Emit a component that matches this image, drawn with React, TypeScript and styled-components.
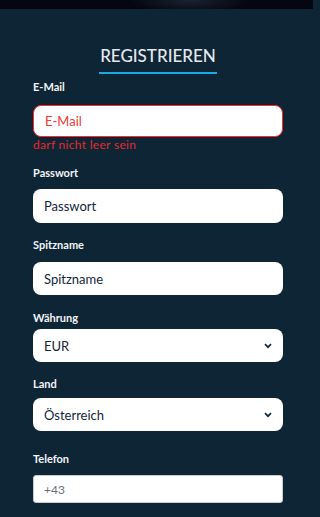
import React from 'react';
import styled, {createGlobalStyle} from 'styled-components';

const GlobalStyle = createGlobalStyle`
  html, body {
    margin: 0;
    padding: 0;
    background: #0e2535;
    font-family: Lato, "Open Sans", sans-serif;
  }
`;

const Page = styled.div`
  width: 313px;
  min-height: 517px;
  background: #0e2535;
`;

const TopBar = styled.div`
  height: 9px;
  background: radial-gradient(ellipse 60px 14px at 190px 0px, #1c2230 0%, #05060f 100%);
`;

const Form = styled.form`
  display: flex;
  flex-direction: column;
  padding: 0 30px 0 33px;
`;

const TitleWrap = styled.div`
  display: flex;
  justify-content: center;
  padding-top: 37px;
`;

const Title = styled.h1`
  margin: 0;
  padding: 0 1px 6px;
  font-size: 17px;
  line-height: 20px;
  font-weight: 500;
  color: #e4e8ec;
  border-bottom: 2px solid #1aa9e0;
`;

const Label = styled.label<{$gap: number; $top: number}>`
  display: block;
  margin-top: ${p => p.$top}px;
  margin-bottom: ${p => p.$gap}px;
  font-size: 11px;
  line-height: 13px;
  font-weight: 700;
  color: #f2f4f6;
`;

const Input = styled.input<{$error?: boolean; $h: number}>`
  box-sizing: border-box;
  width: 100%;
  height: ${p => p.$h}px;
  padding: 0 11px;
  border: ${p => (p.$error ? '1.5px solid #ff2a2a' : 'none')};
  border-radius: 8px;
  background: #fff;
  font-family: inherit;
  font-size: 13px;
  color: #13263a;
  caret-color: #13263a;
  outline: none;

  &::placeholder {
    color: ${p => (p.$error ? '#f03838' : '#13263a')};
    opacity: 1;
  }
`;

const PhoneInput = styled.input`
  box-sizing: border-box;
  width: 100%;
  height: 28px;
  padding: 0 10px;
  border: 1px solid #c8cbcf;
  border-radius: 3px;
  background: #fff;
  font-family: inherit;
  font-size: 12px;
  outline: none;

  &::placeholder {
    color: #6b6f74;
    opacity: 1;
  }
`;

const ErrorText = styled.div`
  margin-top: 1px;
  font-size: 12px;
  line-height: 14px;
  letter-spacing: 0.3px;
  color: #e52b2b;
`;

const SelectBox = styled.div`
  box-sizing: border-box;
  display: flex;
  align-items: center;
  justify-content: space-between;
  height: 33px;
  padding: 0 11px 0 11px;
  border-radius: 8px;
  background: #fff;
  font-size: 13px;
  color: #13263a;
`;

const Chevron = () => (
  <svg width="8" height="6" viewBox="0 0 8 6" fill="none">
    <path d="M1 1.2l3 3 3-3" stroke="#13263a" strokeWidth="1.7" />
  </svg>
);

const App: React.FC = () => {
  return (
    <Page>
      <GlobalStyle />
      <TopBar />
      <Form>
        <TitleWrap>
          <Title>REGISTRIEREN</Title>
        </TitleWrap>

        <Label $top={6} $gap={12}>E-Mail</Label>
        <Input $error $h={32} placeholder="E-Mail" autoFocus />
        <ErrorText>darf nicht leer sein</ErrorText>

        <Label $top={14} $gap={10}>Passwort</Label>
        <Input $h={34} placeholder="Passwort" />

        <Label $top={15} $gap={11}>Spitzname</Label>
        <Input $h={33} placeholder="Spitzname" />

        <Label $top={16} $gap={5}>Währung</Label>
        <SelectBox>
          EUR
          <Chevron />
        </SelectBox>

        <Label $top={15} $gap={8}>Land</Label>
        <SelectBox>
          Österreich
          <Chevron />
        </SelectBox>

        <Label $top={21} $gap={10}>Telefon</Label>
        <PhoneInput placeholder="+43" />
      </Form>
    </Page>
  );
};

export default App;
